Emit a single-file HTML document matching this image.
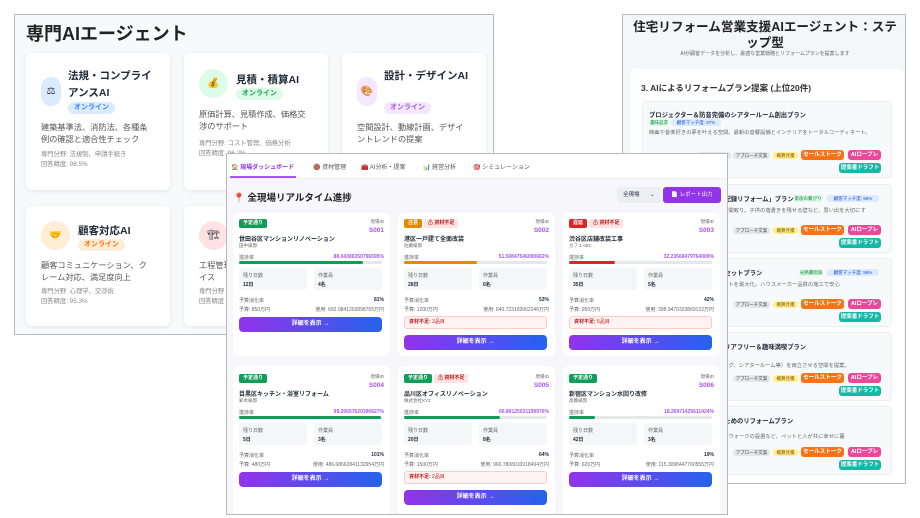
<!DOCTYPE html>
<html><head><meta charset="utf-8"><style>
*{margin:0;padding:0;box-sizing:border-box}
body{width:920px;height:518px;background:#fff;position:relative;overflow:hidden;font-family:"Liberation Sans","Noto Sans CJK JP",sans-serif;color:#1f2937}
.abs{position:absolute}
.pa{left:14px;top:14px;width:480px;height:321px;background:#f8f9fb;border:1px solid #b9b9b9;overflow:hidden}
.ac{position:absolute;background:#fff;border-radius:6px;box-shadow:0 1px 4px rgba(0,0,0,.08);width:144px}
.ic{position:absolute;width:20px;height:20px;border-radius:50%;font-size:10px;text-align:center;line-height:20px}
.at{position:absolute;font-weight:bold;font-size:10.5px;line-height:17px}
.on{position:absolute;font-size:7px;border-radius:8px;padding:0 6px;line-height:12px;font-weight:bold}
.ad{position:absolute;font-size:8.2px;color:#555;line-height:12px}
.am{position:absolute;font-size:6.3px;color:#888;line-height:9.5px}
.pc{left:622px;top:14px;width:284px;height:470px;background:#f5f6f8;border:1px solid #b9b9b9;overflow:hidden}
.it{position:absolute;left:12px;width:250px;background:#f8f9fb;border:1px solid #eceef2;border-radius:4px}
.tg{position:absolute;font-size:4.5px;border-radius:3px;line-height:7px;text-align:center;white-space:nowrap}
.bt{position:absolute;font-size:5.5px;border-radius:3px;line-height:10px;height:10px;color:#fff;font-weight:bold;text-align:center;white-space:nowrap}
.pb{left:226px;top:153px;width:502px;height:362px;background:#f7f7fb;border:1px solid #b9b9b9;overflow:hidden}
.mc{position:absolute;width:157px;background:#fff;border-radius:6px}
.mc div{position:absolute}
.st{font-size:5px;color:#fff;font-weight:bold;background:#0f9d58;border-radius:2px;line-height:9px;padding:0 4px}
.sm{font-size:5px;color:#666}
.sb{background:#f5f6f8;border-radius:3px;width:68px;height:22px}
.btn{left:6px;width:143px;height:15px;border-radius:4px;background:linear-gradient(90deg,#9333ea,#2563eb);color:#fff;font-size:6px;font-weight:bold;text-align:center;line-height:15px}
</style></head><body>

<!-- Panel A -->
<div class="abs pa">
 <div class="abs" style="left:11px;top:5px;font-size:18px;font-weight:bold;color:#222">専門AIエージェント</div>
 <div class="ac" style="left:11px;top:38px;height:137px">
  <div class="ic" style="left:15px;top:24px;width:20px;height:29px;line-height:29px;background:#dbeafe;border-radius:10px">⚖</div>
  <div class="at" style="left:42px;top:15px;width:88px">法規・コンプライアンスAI</div>
  <div class="on" style="left:42px;top:49px;background:#dbeafe;color:#3b82f6">オンライン</div>
  <div class="ad" style="left:15px;top:69px;width:112px">建築基準法、消防法、各種条例の確認と適合性チェック</div>
  <div class="am" style="left:15px;top:97px">専門分野: 法規制、申請手続き<br>回答精度: 98.5%</div>
 </div>
 <div class="ac" style="left:169px;top:38px;height:137px">
  <div class="ic" style="left:15px;top:16px;width:29px;height:29px;line-height:29px;background:#dcfce7">💰</div>
  <div class="at" style="left:52px;top:19px">見積・積算AI</div>
  <div class="on" style="left:52px;top:35px;background:#dcfce7;color:#16a34a">オンライン</div>
  <div class="ad" style="left:15px;top:56px;width:112px">原価計算、見積作成、価格交渉のサポート</div>
  <div class="am" style="left:15px;top:86px">専門分野: コスト管理、価格分析<br>回答精度: 96.2%</div>
 </div>
 <div class="ac" style="left:327px;top:38px;height:137px">
  <div class="ic" style="left:15px;top:24px;width:20px;height:29px;line-height:29px;background:#f3e8ff;border-radius:10px">🎨</div>
  <div class="at" style="left:42px;top:15px;width:88px">設計・デザインAI</div>
  <div class="on" style="left:42px;top:49px;background:#f3e8ff;color:#a855f7">オンライン</div>
  <div class="ad" style="left:15px;top:69px;width:112px">空間設計、動線計画、デザイントレンドの提案</div>
 </div>
 <div class="ac" style="left:11px;top:191px;height:120px">
  <div class="ic" style="left:15px;top:15px;width:29px;height:29px;line-height:29px;background:#ffedd5">🤝</div>
  <div class="at" style="left:52px;top:17px">顧客対応AI</div>
  <div class="on" style="left:52px;top:33px;background:#ffedd5;color:#f97316">オンライン</div>
  <div class="ad" style="left:15px;top:54px;width:112px">顧客コミュニケーション、クレーム対応、満足度向上</div>
  <div class="am" style="left:15px;top:81px">専門分野: 心理学、交渉術<br>回答精度: 95.3%</div>
 </div>
 <div class="ac" style="left:169px;top:191px;height:120px">
  <div class="ic" style="left:15px;top:15px;width:29px;height:29px;line-height:29px;background:#fee2e2">🏗</div>
  <div class="ad" style="left:15px;top:54px;width:112px">工程管理、品質管理のアドバイス</div>
  <div class="am" style="left:15px;top:81px">専門分野<br>回答精度</div>
 </div>
 <div class="ac" style="left:327px;top:191px;height:120px"></div>
</div>

<!-- Panel C -->
<div class="abs pc">
 <div class="abs" style="left:6px;width:272px;top:4px;text-align:center;font-size:12.6px;font-weight:bold;line-height:16px;color:#222">住宅リフォーム営業支援AIエージェント：ステップ型</div>
 <div class="abs" style="left:0;width:284px;top:35px;text-align:center;font-size:5px;color:#666">AIが顧客データを分析し、最適な営業戦略とリフォームプランを提案します</div>
 <div class="abs" style="left:7px;top:54px;width:274px;height:420px;background:#fff;border-radius:5px">
  <div class="abs" style="left:11px;top:13px;font-size:8.5px;font-weight:bold;color:#333">3. AIによるリフォームプラン提案 (上位20件)</div>
  <div class="it" style="top:32px;height:77px">
   <div class="abs" style="left:6px;top:8px;font-size:6.3px;font-weight:bold">プロジェクター＆防音完備のシアタールーム創出プラン</div>
   <div class="tg" style="left:6px;top:17px;width:20px;background:#dcfce7;color:#15803d">趣味追求</div>
   <div class="tg" style="left:28px;top:17px;width:50px;background:#dbeafe;color:#1d4ed8">顧客マッチ度: 97%</div>
   <div class="abs" style="left:6px;top:27px;font-size:5.3px;color:#666;width:236px;line-height:9px">映画や音楽好きの夢を叶える空間。最新の音響設備とインテリアをトータルコーディネート。</div>
   <div class="tg" style="left:54px;top:50px;width:34px;background:#e5e7eb;color:#444">顧客心理分析</div>
   <div class="tg" style="left:90px;top:50px;width:37px;background:#e5e7eb;color:#444">アプローチ文案</div>
   <div class="tg" style="left:130px;top:50px;width:25px;background:#fef08a;color:#854d0e">概算見積</div>
   <div class="bt" style="left:158px;top:48px;width:43px;background:#f97316">セールストーク</div>
   <div class="bt" style="left:205px;top:48px;width:33px;background:#ec4899">AIロープレ</div>
   <div class="bt" style="left:196px;top:61px;width:42px;background:#14b8a6">提案書ドラフト</div>
  </div>
  <div class="it" style="top:115px;height:69px">
   <div class="abs" style="left:6px;top:9px;font-size:6.3px;font-weight:bold">家族の思い出を刻む「成長記録リフォーム」プラン</div>
   <div class="tg" style="left:150px;top:10px;width:30px;background:#dcfce7;color:#15803d">家族の繋がり</div>
   <div class="tg" style="left:184px;top:10px;width:52px;background:#dbeafe;color:#1d4ed8">顧客マッチ度: 96%</div>
   <div class="abs" style="left:6px;top:21px;font-size:5.3px;color:#666">子供の成長に合わせて変化できる間取り。子供の落書きを残せる壁など、思い出を大切にす</div>
   <div class="tg" style="left:90px;top:42px;width:37px;background:#e5e7eb;color:#444">アプローチ文案</div>
   <div class="tg" style="left:130px;top:42px;width:25px;background:#fef08a;color:#854d0e">概算見積</div>
   <div class="bt" style="left:158px;top:40px;width:43px;background:#f97316">セールストーク</div>
   <div class="bt" style="left:205px;top:40px;width:33px;background:#ec4899">AIロープレ</div>
   <div class="bt" style="left:196px;top:53px;width:42px;background:#14b8a6">提案書ドラフト</div>
  </div>
  <div class="it" style="top:189px;height:69px">
   <div class="abs" style="left:6px;top:9px;font-size:6.3px;font-weight:bold">資産価値を高める外壁塗装セットプラン</div>
   <div class="tg" style="left:156px;top:10px;width:24px;background:#dcfce7;color:#15803d">光熱費削減</div>
   <div class="tg" style="left:184px;top:10px;width:52px;background:#dbeafe;color:#1d4ed8">顧客マッチ度: 96%</div>
   <div class="abs" style="left:6px;top:21px;font-size:5.3px;color:#666">将来の売却も見据え経済的メリットを最大化。ハウスメーカー品質の施工で安心</div>
   <div class="tg" style="left:90px;top:42px;width:37px;background:#e5e7eb;color:#444">アプローチ文案</div>
   <div class="tg" style="left:130px;top:42px;width:25px;background:#fef08a;color:#854d0e">概算見積</div>
   <div class="bt" style="left:158px;top:40px;width:43px;background:#f97316">セールストーク</div>
   <div class="bt" style="left:205px;top:40px;width:33px;background:#ec4899">AIロープレ</div>
   <div class="bt" style="left:196px;top:53px;width:42px;background:#14b8a6">提案書ドラフト</div>
  </div>
  <div class="it" style="top:263px;height:69px">
   <div class="abs" style="left:6px;top:9px;font-size:6.3px;font-weight:bold">老後も安心して暮らせるバリアフリー＆趣味満喫プラン</div>
   <div class="tg" style="left:6px;top:18px;width:50px;background:#dbeafe;color:#1d4ed8">顧客マッチ度: 95%</div>
   <div class="abs" style="left:6px;top:28px;font-size:5.3px;color:#666">段差解消と趣味空間（ガーデニング、シアタールーム等）を両立させる空間を提案。</div>
   <div class="tg" style="left:90px;top:42px;width:37px;background:#e5e7eb;color:#444">アプローチ文案</div>
   <div class="tg" style="left:130px;top:42px;width:25px;background:#fef08a;color:#854d0e">概算見積</div>
   <div class="bt" style="left:158px;top:40px;width:43px;background:#f97316">セールストーク</div>
   <div class="bt" style="left:205px;top:40px;width:33px;background:#ec4899">AIロープレ</div>
   <div class="bt" style="left:196px;top:53px;width:42px;background:#14b8a6">提案書ドラフト</div>
  </div>
  <div class="it" style="top:337px;height:69px">
   <div class="abs" style="left:6px;top:9px;font-size:6.3px;font-weight:bold">ペットと人が快適に暮らすためのリフォームプラン</div>
   <div class="abs" style="left:6px;top:25px;font-size:5.3px;color:#666">滑りにくい床材の採用、キャットウォークの設置など、ペットと人が共に幸せに暮</div>
   <div class="tg" style="left:90px;top:42px;width:37px;background:#e5e7eb;color:#444">アプローチ文案</div>
   <div class="tg" style="left:130px;top:42px;width:25px;background:#fef08a;color:#854d0e">概算見積</div>
   <div class="bt" style="left:158px;top:40px;width:43px;background:#f97316">セールストーク</div>
   <div class="bt" style="left:205px;top:40px;width:33px;background:#ec4899">AIロープレ</div>
   <div class="bt" style="left:196px;top:53px;width:42px;background:#14b8a6">提案書ドラフト</div>
  </div>
 </div>
</div>

<!-- Panel B -->
<div class="abs pb">
 <div class="abs" style="left:0;top:0;width:502px;height:25px;background:#fff;border-bottom:1px solid #eee"></div>
 <div class="abs" style="left:4px;top:8px;font-size:6px;color:#9333ea;font-weight:bold">🏠 現場ダッシュボード</div>
 <div class="abs" style="left:3px;top:22px;width:66px;height:2px;background:#a855f7"></div>
 <div class="abs" style="left:86px;top:8px;font-size:6px;color:#555">🟤 資材管理</div>
 <div class="abs" style="left:134px;top:8px;font-size:6px;color:#555">🧰 AI分析・提案</div>
 <div class="abs" style="left:196px;top:8px;font-size:6px;color:#555">📊 経営分析</div>
 <div class="abs" style="left:246px;top:8px;font-size:6px;color:#555">🎯 シミュレーション</div>
 <div class="abs" style="left:6px;top:36px;font-size:9.5px;font-weight:bold;color:#222"><span style="color:#e11d48">📍</span> 全現場リアルタイム進捗</div>
 <div class="abs" style="left:390px;top:33px;width:44px;height:16px;background:#eceef2;border-radius:3px;font-size:5.5px;line-height:16px;padding-left:6px">全現場 <span style="margin-left:9px">⌄</span></div>
 <div class="abs" style="left:436px;top:33px;width:58px;height:16px;background:#9333ea;border-radius:3px;font-size:5.5px;line-height:16px;color:#fff;text-align:center">📄 レポート出力</div>

 <!-- row 1 -->
 <div class="mc" style="left:6px;top:59px;height:143px">
  <div class="st" style="left:6px;top:6px">予定通り</div>
  <div class="sm" style="right:6px;top:6px;font-size:4.5px">現場ID</div>
  <div style="right:6px;top:14px;font-size:6.5px;color:#a855f7;font-weight:bold">S001</div>
  <div style="left:6px;top:21px;font-size:6px;font-weight:bold">世田谷区マンションリノベーション</div>
  <div class="sm" style="left:6px;top:30px;font-size:4.5px">田中様邸</div>
  <div class="sm" style="left:6px;top:41px">進捗率</div>
  <div style="right:6px;top:41px;font-size:5px;color:#a855f7;font-weight:bold">88.04386350796595%</div>
  <div style="left:6px;top:48px;width:143px;height:3px;background:#e5e7eb;border-radius:2px"><div style="left:0;top:0;width:87%;height:3px;background:#0f9d58;border-radius:2px"></div></div>
  <div class="sb" style="left:6px;top:55px"><div class="sm" style="left:4px;top:4px">残り日数</div><div style="left:4px;top:13px;font-size:5px;font-weight:bold">12日</div></div>
  <div class="sb" style="left:81px;top:55px"><div class="sm" style="left:4px;top:4px">作業員</div><div style="left:4px;top:13px;font-size:5px;font-weight:bold">4名</div></div>
  <div class="sm" style="left:6px;top:84px">予算消化率</div><div style="right:6px;top:84px;font-size:5px;font-weight:bold">81%</div>
  <div class="sm" style="left:6px;top:93px">予算: 850万円</div><div class="sm" style="right:6px;top:93px">使用: 692.0841202898765万円</div>
  <div class="btn" style="top:104px">詳細を表示 →</div>
 </div>
 <div class="mc" style="left:171px;top:59px;height:143px">
  <div class="st" style="left:6px;top:6px;background:#e58a00">注意</div>
  <div style="left:26px;top:6px;font-size:5px;background:#fee2e2;color:#b91c1c;border-radius:2px;line-height:9px;padding:0 4px;font-weight:bold">⚠ 資材不足</div>
  <div class="sm" style="right:6px;top:6px;font-size:4.5px">現場ID</div>
  <div style="right:6px;top:14px;font-size:6.5px;color:#a855f7;font-weight:bold">S002</div>
  <div style="left:6px;top:21px;font-size:6px;font-weight:bold">港区一戸建て全面改装</div>
  <div class="sm" style="left:6px;top:30px;font-size:4.5px">佐藤様邸</div>
  <div class="sm" style="left:6px;top:41px">進捗率</div>
  <div style="right:6px;top:41px;font-size:5px;color:#a855f7;font-weight:bold">51.50847546090662%</div>
  <div style="left:6px;top:48px;width:143px;height:3px;background:#e5e7eb;border-radius:2px"><div style="left:0;top:0;width:51%;height:3px;background:#e58a00;border-radius:2px"></div></div>
  <div class="sb" style="left:6px;top:55px"><div class="sm" style="left:4px;top:4px">残り日数</div><div style="left:4px;top:13px;font-size:5px;font-weight:bold">28日</div></div>
  <div class="sb" style="left:81px;top:55px"><div class="sm" style="left:4px;top:4px">作業員</div><div style="left:4px;top:13px;font-size:5px;font-weight:bold">6名</div></div>
  <div class="sm" style="left:6px;top:84px">予算消化率</div><div style="right:6px;top:84px;font-size:5px;font-weight:bold">53%</div>
  <div class="sm" style="left:6px;top:93px">予算: 1200万円</div><div class="sm" style="right:6px;top:93px">使用: 640.723192062246万円</div>
  <div style="left:6px;top:103px;width:143px;height:13px;background:#fef2f2;border:1px solid #fecaca;border-radius:3px;font-size:5px;color:#b91c1c;line-height:11px;padding-left:4px"><b>資材不足:</b> 3品目</div>
  <div class="btn" style="top:122px">詳細を表示 →</div>
 </div>
 <div class="mc" style="left:336px;top:59px;height:143px">
  <div class="st" style="left:6px;top:6px;background:#dc2626">遅延</div>
  <div style="left:26px;top:6px;font-size:5px;background:#fee2e2;color:#b91c1c;border-radius:2px;line-height:9px;padding:0 4px;font-weight:bold">⚠ 資材不足</div>
  <div class="sm" style="right:6px;top:6px;font-size:4.5px">現場ID</div>
  <div style="right:6px;top:14px;font-size:6.5px;color:#a855f7;font-weight:bold">S003</div>
  <div style="left:6px;top:21px;font-size:6px;font-weight:bold">渋谷区店舗改装工事</div>
  <div class="sm" style="left:6px;top:30px;font-size:4.5px">カフェABC</div>
  <div class="sm" style="left:6px;top:41px">進捗率</div>
  <div style="right:6px;top:41px;font-size:5px;color:#a855f7;font-weight:bold">32.23568479764009%</div>
  <div style="left:6px;top:48px;width:143px;height:3px;background:#e5e7eb;border-radius:2px"><div style="left:0;top:0;width:32%;height:3px;background:#dc2626;border-radius:2px"></div></div>
  <div class="sb" style="left:6px;top:55px"><div class="sm" style="left:4px;top:4px">残り日数</div><div style="left:4px;top:13px;font-size:5px;font-weight:bold">35日</div></div>
  <div class="sb" style="left:81px;top:55px"><div class="sm" style="left:4px;top:4px">作業員</div><div style="left:4px;top:13px;font-size:5px;font-weight:bold">5名</div></div>
  <div class="sm" style="left:6px;top:84px">予算消化率</div><div style="right:6px;top:84px;font-size:5px;font-weight:bold">42%</div>
  <div class="sm" style="left:6px;top:93px">予算: 950万円</div><div class="sm" style="right:6px;top:93px">使用: 398.9479323869132万円</div>
  <div style="left:6px;top:103px;width:143px;height:13px;background:#fef2f2;border:1px solid #fecaca;border-radius:3px;font-size:5px;color:#b91c1c;line-height:11px;padding-left:4px"><b>資材不足:</b> 5品目</div>
  <div class="btn" style="top:122px">詳細を表示 →</div>
 </div>

 <!-- row 2 -->
 <div class="mc" style="left:6px;top:212px;height:150px">
  <div class="st" style="left:6px;top:8px">予定通り</div>
  <div class="sm" style="right:6px;top:8px;font-size:4.5px">現場ID</div>
  <div style="right:6px;top:16px;font-size:6.5px;color:#a855f7;font-weight:bold">S004</div>
  <div style="left:6px;top:23px;font-size:6px;font-weight:bold">目黒区キッチン・浴室リフォーム</div>
  <div class="sm" style="left:6px;top:32px;font-size:4.5px">鈴木様邸</div>
  <div class="sm" style="left:6px;top:43px">進捗率</div>
  <div style="right:6px;top:43px;font-size:5px;color:#a855f7;font-weight:bold">99.20657620390627%</div>
  <div style="left:6px;top:50px;width:143px;height:3px;background:#e5e7eb;border-radius:2px"><div style="left:0;top:0;width:99%;height:3px;background:#0f9d58;border-radius:2px"></div></div>
  <div class="sb" style="left:6px;top:57px"><div class="sm" style="left:4px;top:4px">残り日数</div><div style="left:4px;top:13px;font-size:5px;font-weight:bold">5日</div></div>
  <div class="sb" style="left:81px;top:57px"><div class="sm" style="left:4px;top:4px">作業員</div><div style="left:4px;top:13px;font-size:5px;font-weight:bold">3名</div></div>
  <div class="sm" style="left:6px;top:86px">予算消化率</div><div style="right:6px;top:86px;font-size:5px;font-weight:bold">101%</div>
  <div class="sm" style="left:6px;top:95px">予算: 480万円</div><div class="sm" style="right:6px;top:95px">使用: 486.68662841132954万円</div>
  <div class="btn" style="top:106px">詳細を表示 →</div>
 </div>
 <div class="mc" style="left:171px;top:212px;height:150px">
  <div class="st" style="left:6px;top:8px">予定通り</div>
  <div style="left:36px;top:8px;font-size:5px;background:#fee2e2;color:#b91c1c;border-radius:2px;line-height:9px;padding:0 4px;font-weight:bold">⚠ 資材不足</div>
  <div class="sm" style="right:6px;top:8px;font-size:4.5px">現場ID</div>
  <div style="right:6px;top:16px;font-size:6.5px;color:#a855f7;font-weight:bold">S005</div>
  <div style="left:6px;top:23px;font-size:6px;font-weight:bold">品川区オフィスリノベーション</div>
  <div class="sm" style="left:6px;top:32px;font-size:4.5px">株式会社XYZ</div>
  <div class="sm" style="left:6px;top:43px">進捗率</div>
  <div style="right:6px;top:43px;font-size:5px;color:#a855f7;font-weight:bold">66.89125021199976%</div>
  <div style="left:6px;top:50px;width:143px;height:3px;background:#e5e7eb;border-radius:2px"><div style="left:0;top:0;width:67%;height:3px;background:#0f9d58;border-radius:2px"></div></div>
  <div class="sb" style="left:6px;top:57px"><div class="sm" style="left:4px;top:4px">残り日数</div><div style="left:4px;top:13px;font-size:5px;font-weight:bold">20日</div></div>
  <div class="sb" style="left:81px;top:57px"><div class="sm" style="left:4px;top:4px">作業員</div><div style="left:4px;top:13px;font-size:5px;font-weight:bold">8名</div></div>
  <div class="sm" style="left:6px;top:86px">予算消化率</div><div style="right:6px;top:86px;font-size:5px;font-weight:bold">64%</div>
  <div class="sm" style="left:6px;top:95px">予算: 1500万円</div><div class="sm" style="right:6px;top:95px">使用: 960.7808010918494万円</div>
  <div style="left:6px;top:105px;width:143px;height:13px;background:#fef2f2;border:1px solid #fecaca;border-radius:3px;font-size:5px;color:#b91c1c;line-height:11px;padding-left:4px"><b>資材不足:</b> 2品目</div>
  <div class="btn" style="top:124px">詳細を表示 →</div>
 </div>
 <div class="mc" style="left:336px;top:212px;height:150px">
  <div class="st" style="left:6px;top:8px">予定通り</div>
  <div class="sm" style="right:6px;top:8px;font-size:4.5px">現場ID</div>
  <div style="right:6px;top:16px;font-size:6.5px;color:#a855f7;font-weight:bold">S006</div>
  <div style="left:6px;top:23px;font-size:6px;font-weight:bold">新宿区マンション水回り改修</div>
  <div class="sm" style="left:6px;top:32px;font-size:4.5px">高橋様邸</div>
  <div class="sm" style="left:6px;top:43px">進捗率</div>
  <div style="right:6px;top:43px;font-size:5px;color:#a855f7;font-weight:bold">18.26971425611424%</div>
  <div style="left:6px;top:50px;width:143px;height:3px;background:#e5e7eb;border-radius:2px"><div style="left:0;top:0;width:18%;height:3px;background:#0f9d58;border-radius:2px"></div></div>
  <div class="sb" style="left:6px;top:57px"><div class="sm" style="left:4px;top:4px">残り日数</div><div style="left:4px;top:13px;font-size:5px;font-weight:bold">42日</div></div>
  <div class="sb" style="left:81px;top:57px"><div class="sm" style="left:4px;top:4px">作業員</div><div style="left:4px;top:13px;font-size:5px;font-weight:bold">3名</div></div>
  <div class="sm" style="left:6px;top:86px">予算消化率</div><div style="right:6px;top:86px;font-size:5px;font-weight:bold">19%</div>
  <div class="sm" style="left:6px;top:95px">予算: 620万円</div><div class="sm" style="right:6px;top:95px">使用: 115.3098447760555万円</div>
  <div class="btn" style="top:106px">詳細を表示 →</div>
 </div>
</div>
</body></html>
